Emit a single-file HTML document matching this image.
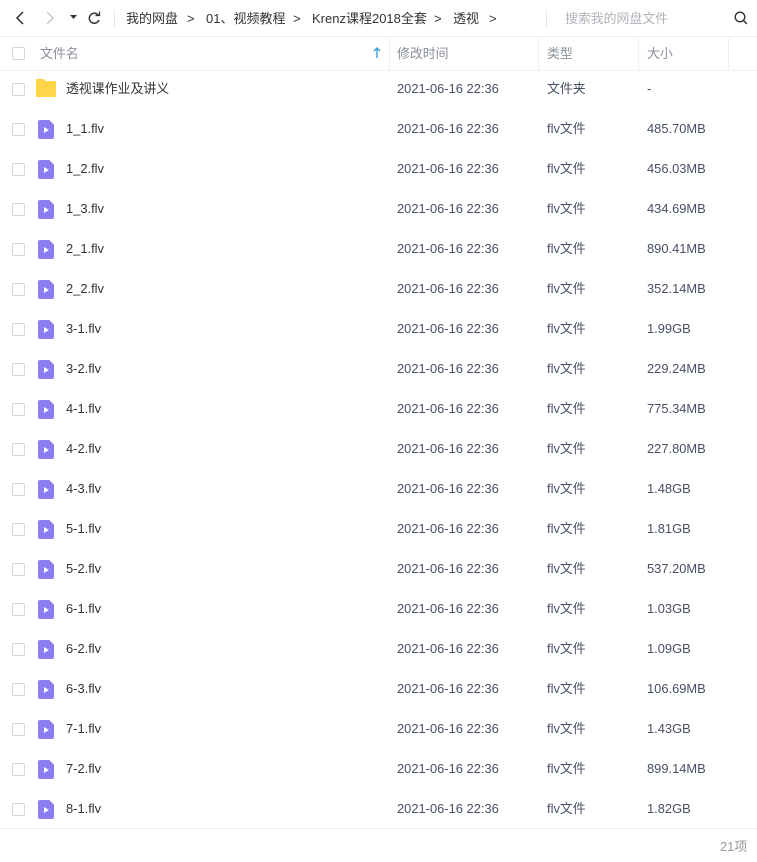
<!DOCTYPE html>
<html><head><meta charset="utf-8"><style>
*{margin:0;padding:0;box-sizing:border-box}
body{width:757px;height:862px;background:#fff;font-family:"Liberation Sans","Noto Sans CJK SC",sans-serif;color:#333;font-size:12px;position:relative;overflow:hidden}
.a{position:absolute;white-space:nowrap}
.bc{position:absolute;top:0;line-height:37px;font-size:13px;color:#333;white-space:nowrap}
.cb{position:absolute;left:12px;width:13px;height:13px;border:1px solid #d6d6d6;border-radius:2px;background:#fff}
.row{position:absolute;left:0;width:757px;height:40px}
.row .t{position:absolute;top:0;line-height:40px;font-size:12.9px;color:#464f63}
.fi{position:absolute;left:38px;top:11px;width:16px;height:19px;background:#8b7cf0;border-radius:2px;clip-path:polygon(0 0,70% 0,100% 25%,100% 100%,0 100%)}
.fi:after{content:"";position:absolute;left:6px;top:7px;border-left:5px solid #fff;border-top:3px solid transparent;border-bottom:3px solid transparent}
.hd{position:absolute;top:38px;height:32px;line-height:32px;color:#8a8f99;font-size:12.9px}
.sep{position:absolute;top:38px;width:1px;height:32px;background:#eee}
</style></head><body>
<div class="a" style="left:0;top:0;width:757px;height:37px;border-bottom:1px solid #eef0f3"></div>
<svg class="a" style="left:14px;top:11px" width="12" height="14"><path d="M9 1L3 7l6 6" stroke="#333" stroke-width="1.5" fill="none"/></svg>
<svg class="a" style="left:44px;top:11px" width="12" height="14"><path d="M3 1l6 6-6 6" stroke="#bbb" stroke-width="1.2" fill="none"/></svg>
<svg class="a" style="left:70px;top:15px" width="8" height="6"><path d="M0 0h7l-3.5 4z" fill="#333"/></svg>
<svg class="a" style="left:87px;top:11px" width="14" height="14"><path d="M11.5 4.5A5 5 0 1 0 12 9" stroke="#333" stroke-width="1.5" fill="none"/><path d="M8.5 4.5h4v-4" stroke="#333" stroke-width="1.3" fill="none"/></svg>
<div class="a" style="left:114px;top:10px;width:1px;height:17px;background:#e6e6e6"></div>
<div class="bc" style="left:126px">我的网盘</div>
<div class="bc" style="left:187px">&gt;</div>
<div class="bc" style="left:206px">01、视频教程</div>
<div class="bc" style="left:293px">&gt;</div>
<div class="bc" style="left:312px">Krenz课程2018全套</div>
<div class="bc" style="left:434px">&gt;</div>
<div class="bc" style="left:453px">透视</div>
<div class="bc" style="left:489px">&gt;</div>
<div class="a" style="left:546px;top:10px;width:1px;height:17px;background:#e6e6e6"></div>
<div class="bc" style="left:565px;font-size:12.9px;color:#b0b3ba">搜索我的网盘文件</div>
<svg class="a" style="left:734px;top:11px" width="14" height="14"><circle cx="6" cy="6" r="4.8" stroke="#333" stroke-width="1.4" fill="none"/><path d="M9.5 9.5L13 13" stroke="#333" stroke-width="1.4"/></svg>

<div class="cb" style="top:47px"></div>
<div class="hd" style="left:40px">文件名</div>
<svg class="a" style="left:373px;top:47px" width="8" height="11"><path d="M4 1v10M1 4l3-3 3 3" stroke="#3a9fd8" stroke-width="1.4" fill="none"/></svg>
<div class="sep" style="left:389px"></div>
<div class="hd" style="left:397px">修改时间</div>
<div class="sep" style="left:538px"></div>
<div class="hd" style="left:547px">类型</div>
<div class="sep" style="left:638px"></div>
<div class="hd" style="left:647px">大小</div>
<div class="sep" style="left:728px"></div>
<div class="a" style="left:0;top:70px;width:757px;height:1px;background:#f3f4f6"></div>

<div class="row" style="top:69px"><div class="cb" style="top:14px"></div>
<div class="a" style="left:36px;top:12px;width:20px;height:16px;background:#ffd54a;border-radius:1px"></div>
<div class="a" style="left:36px;top:10px;width:9px;height:4px;background:#ffd54a;border-radius:1px 1px 0 0"></div>
<span class="t" style="left:66px;color:#333">透视课作业及讲义</span><span class="t" style="left:397px">2021-06-16 22:36</span><span class="t" style="left:547px">文件夹</span><span class="t" style="left:647px">-</span></div>

<div class="row" style="top:109px"><div class="cb" style="top:14px"></div><div class="fi"></div><span class="t" style="left:66px;color:#333">1_1.flv</span><span class="t" style="left:397px">2021-06-16 22:36</span><span class="t" style="left:547px">flv文件</span><span class="t" style="left:647px">485.70MB</span></div>
<div class="row" style="top:149px"><div class="cb" style="top:14px"></div><div class="fi"></div><span class="t" style="left:66px;color:#333">1_2.flv</span><span class="t" style="left:397px">2021-06-16 22:36</span><span class="t" style="left:547px">flv文件</span><span class="t" style="left:647px">456.03MB</span></div>
<div class="row" style="top:189px"><div class="cb" style="top:14px"></div><div class="fi"></div><span class="t" style="left:66px;color:#333">1_3.flv</span><span class="t" style="left:397px">2021-06-16 22:36</span><span class="t" style="left:547px">flv文件</span><span class="t" style="left:647px">434.69MB</span></div>
<div class="row" style="top:229px"><div class="cb" style="top:14px"></div><div class="fi"></div><span class="t" style="left:66px;color:#333">2_1.flv</span><span class="t" style="left:397px">2021-06-16 22:36</span><span class="t" style="left:547px">flv文件</span><span class="t" style="left:647px">890.41MB</span></div>
<div class="row" style="top:269px"><div class="cb" style="top:14px"></div><div class="fi"></div><span class="t" style="left:66px;color:#333">2_2.flv</span><span class="t" style="left:397px">2021-06-16 22:36</span><span class="t" style="left:547px">flv文件</span><span class="t" style="left:647px">352.14MB</span></div>
<div class="row" style="top:309px"><div class="cb" style="top:14px"></div><div class="fi"></div><span class="t" style="left:66px;color:#333">3-1.flv</span><span class="t" style="left:397px">2021-06-16 22:36</span><span class="t" style="left:547px">flv文件</span><span class="t" style="left:647px">1.99GB</span></div>
<div class="row" style="top:349px"><div class="cb" style="top:14px"></div><div class="fi"></div><span class="t" style="left:66px;color:#333">3-2.flv</span><span class="t" style="left:397px">2021-06-16 22:36</span><span class="t" style="left:547px">flv文件</span><span class="t" style="left:647px">229.24MB</span></div>
<div class="row" style="top:389px"><div class="cb" style="top:14px"></div><div class="fi"></div><span class="t" style="left:66px;color:#333">4-1.flv</span><span class="t" style="left:397px">2021-06-16 22:36</span><span class="t" style="left:547px">flv文件</span><span class="t" style="left:647px">775.34MB</span></div>
<div class="row" style="top:429px"><div class="cb" style="top:14px"></div><div class="fi"></div><span class="t" style="left:66px;color:#333">4-2.flv</span><span class="t" style="left:397px">2021-06-16 22:36</span><span class="t" style="left:547px">flv文件</span><span class="t" style="left:647px">227.80MB</span></div>
<div class="row" style="top:469px"><div class="cb" style="top:14px"></div><div class="fi"></div><span class="t" style="left:66px;color:#333">4-3.flv</span><span class="t" style="left:397px">2021-06-16 22:36</span><span class="t" style="left:547px">flv文件</span><span class="t" style="left:647px">1.48GB</span></div>
<div class="row" style="top:509px"><div class="cb" style="top:14px"></div><div class="fi"></div><span class="t" style="left:66px;color:#333">5-1.flv</span><span class="t" style="left:397px">2021-06-16 22:36</span><span class="t" style="left:547px">flv文件</span><span class="t" style="left:647px">1.81GB</span></div>
<div class="row" style="top:549px"><div class="cb" style="top:14px"></div><div class="fi"></div><span class="t" style="left:66px;color:#333">5-2.flv</span><span class="t" style="left:397px">2021-06-16 22:36</span><span class="t" style="left:547px">flv文件</span><span class="t" style="left:647px">537.20MB</span></div>
<div class="row" style="top:589px"><div class="cb" style="top:14px"></div><div class="fi"></div><span class="t" style="left:66px;color:#333">6-1.flv</span><span class="t" style="left:397px">2021-06-16 22:36</span><span class="t" style="left:547px">flv文件</span><span class="t" style="left:647px">1.03GB</span></div>
<div class="row" style="top:629px"><div class="cb" style="top:14px"></div><div class="fi"></div><span class="t" style="left:66px;color:#333">6-2.flv</span><span class="t" style="left:397px">2021-06-16 22:36</span><span class="t" style="left:547px">flv文件</span><span class="t" style="left:647px">1.09GB</span></div>
<div class="row" style="top:669px"><div class="cb" style="top:14px"></div><div class="fi"></div><span class="t" style="left:66px;color:#333">6-3.flv</span><span class="t" style="left:397px">2021-06-16 22:36</span><span class="t" style="left:547px">flv文件</span><span class="t" style="left:647px">106.69MB</span></div>
<div class="row" style="top:709px"><div class="cb" style="top:14px"></div><div class="fi"></div><span class="t" style="left:66px;color:#333">7-1.flv</span><span class="t" style="left:397px">2021-06-16 22:36</span><span class="t" style="left:547px">flv文件</span><span class="t" style="left:647px">1.43GB</span></div>
<div class="row" style="top:749px"><div class="cb" style="top:14px"></div><div class="fi"></div><span class="t" style="left:66px;color:#333">7-2.flv</span><span class="t" style="left:397px">2021-06-16 22:36</span><span class="t" style="left:547px">flv文件</span><span class="t" style="left:647px">899.14MB</span></div>
<div class="row" style="top:789px"><div class="cb" style="top:14px"></div><div class="fi"></div><span class="t" style="left:66px;color:#333">8-1.flv</span><span class="t" style="left:397px">2021-06-16 22:36</span><span class="t" style="left:547px">flv文件</span><span class="t" style="left:647px">1.82GB</span></div>

<div class="a" style="left:0;top:828px;width:757px;height:1px;background:#f0f0f2"></div>
<div class="a" style="left:720px;top:836px;font-size:12.9px;color:#999">21项</div>
</body></html>
